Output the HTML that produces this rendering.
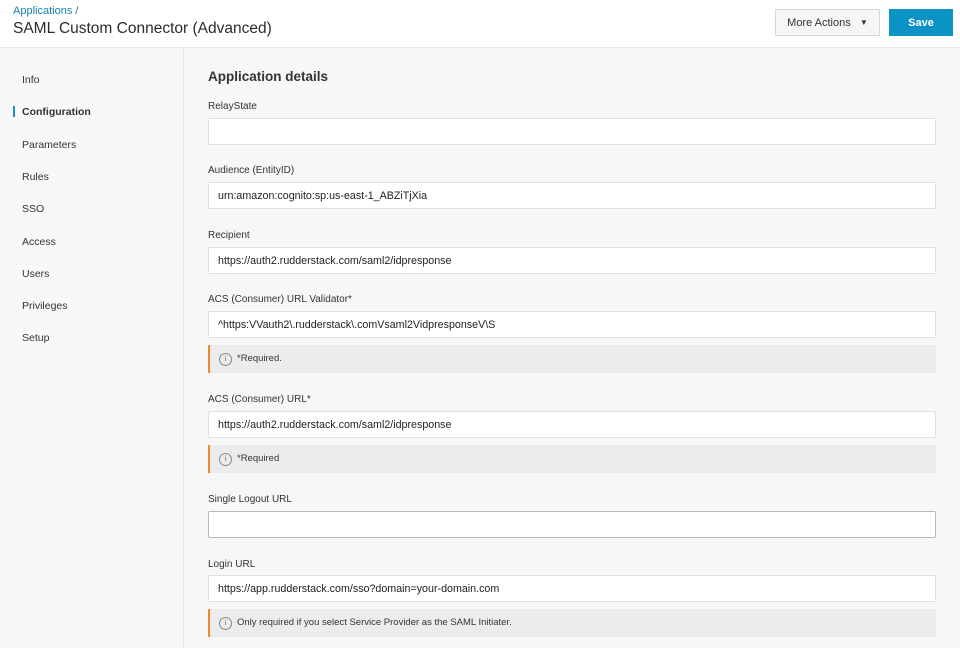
<!DOCTYPE html>
<html><head><meta charset="utf-8"><style>
*{box-sizing:border-box;margin:0;padding:0}
body{width:960px;height:648px;overflow:hidden;background:#f7f7f8;font-family:"Liberation Sans",sans-serif;color:#1d1d21;position:relative}
.hdr{position:absolute;left:0;top:0;width:960px;height:48px;background:#fff;border-bottom:1px solid #e6e6e9}
.crumb{position:absolute;left:13px;top:5px;font-size:11px;color:#1a7fb5}
.title{position:absolute;left:13px;top:20px;font-size:15.5px;color:#2b2b2f}
.btn{position:absolute;top:9px;height:27px;font-size:11px;display:flex;align-items:center;justify-content:center}
.more{left:775px;width:105px;background:#f5f6f8;border:1px solid #d7d7dc;color:#333}
.save{left:889px;width:64px;background:#0b93c6;color:#fff;font-weight:bold}
.side{position:absolute;left:0;top:48px;width:184px;height:600px;background:#f7f8fa;border-right:1px solid #e6e6e9}
.si{position:absolute;left:22px;font-size:10.5px;color:#333}
.ind{position:absolute;left:13px;width:2px;height:11px;background:#1a8fc6}
.h{position:absolute;left:208px;top:69px;font-size:13.5px;font-weight:bold;color:#333}
.lbl{position:absolute;left:208px;font-size:10px;color:#333}
.in{position:absolute;left:208px;width:728px;height:27px;background:#fff;border:1px solid #e0e0e4;border-radius:2px;font-size:10.7px;padding-left:9px;line-height:27px;color:#222}
.note{position:absolute;left:208px;width:728px;height:28px;background:#ececed;border-left:2px solid #ee8a2c;font-size:9.5px;line-height:28px;padding-left:27px;color:#333}
.note:before{content:"i";position:absolute;left:9px;top:8px;width:11px;height:11px;border:1px solid #888;border-radius:50%;font-size:8px;line-height:10px;text-align:center;color:#777}
</style></head><body>
<div class="hdr">
<div class="crumb">Applications /</div>
<div class="title">SAML Custom Connector (Advanced)</div>
<div class="btn more">More Actions&nbsp;&nbsp;&nbsp;<span style="font-size:8px">▼</span></div>
<div class="btn save">Save</div>
</div>
<div class="side">
<div class="si" style="top:26px">Info</div>
<div class="ind" style="top:58px"></div>
<div class="si" style="top:58px;font-weight:bold">Configuration</div>
<div class="si" style="top:91px">Parameters</div>
<div class="si" style="top:123px">Rules</div>
<div class="si" style="top:155px">SSO</div>
<div class="si" style="top:188px">Access</div>
<div class="si" style="top:220px">Users</div>
<div class="si" style="top:252px">Privileges</div>
<div class="si" style="top:284px">Setup</div>
</div>
<div class="h">Application details</div>
<div class="lbl" style="top:101px">RelayState</div>
<div class="in" style="top:118px"></div>
<div class="lbl" style="top:165px">Audience (EntityID)</div>
<div class="in" style="top:182px">urn:amazon:cognito:sp:us-east-1_ABZiTjXia</div>
<div class="lbl" style="top:230px">Recipient</div>
<div class="in" style="top:247px">https://auth2.rudderstack.com/saml2/idpresponse</div>
<div class="lbl" style="top:294px">ACS (Consumer) URL Validator*</div>
<div class="in" style="top:311px">^https:VVauth2\.rudderstack\.comVsaml2VidpresponseV\S</div>
<div class="note" style="top:345px">*Required.</div>
<div class="lbl" style="top:394px">ACS (Consumer) URL*</div>
<div class="in" style="top:411px">https://auth2.rudderstack.com/saml2/idpresponse</div>
<div class="note" style="top:445px">*Required</div>
<div class="lbl" style="top:494px">Single Logout URL</div>
<div class="in" style="top:511px;border-color:#b8b8bd"></div>
<div class="lbl" style="top:559px">Login URL</div>
<div class="in" style="top:575px">https://app.rudderstack.com/sso?domain=your-domain.com</div>
<div class="note" style="top:609px">Only required if you select Service Provider as the SAML Initiater.</div>
</body></html>
